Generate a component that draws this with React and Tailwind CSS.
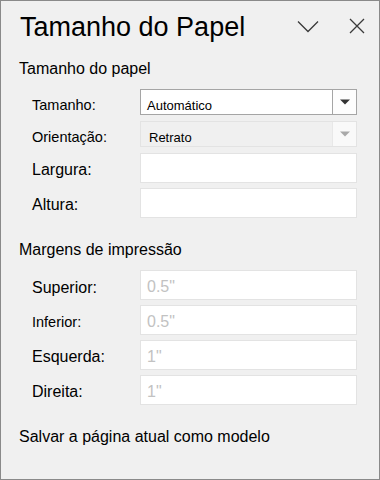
import React from 'react';

const font = { fontFamily: '"Liberation Sans", Arial, sans-serif' };

function Caret({ color }) {
  return (
    <svg width="10" height="6" viewBox="0 0 10 6">
      <path d="M0 0.5 H10 L5 5.5 Z" fill={color} />
    </svg>
  );
}

// label on the left, control on the right; pt on the label nudges its text a bit lower
function Row({ label, labelSize, labelShift, mt, h, children }) {
  return (
    <div className={`flex items-center pl-[31px] ${mt} ${h}`}>
      <div className={`w-[108px] leading-none text-black ${labelSize} ${labelShift}`}>{label}</div>
      <div className="w-[217px] h-full">{children}</div>
    </div>
  );
}

function Field({ value }) {
  return (
    <div className="h-full border border-[#e3e3e3] bg-white flex items-center pl-[6px] pt-[4px] text-[16px] leading-none text-[#c2c2c2]">
      {value}
    </div>
  );
}

export default function App() {
  return (
    <div style={font} className="w-[380px] h-[480px] border border-[#8a8a8a] bg-[#f0f0f0] flex flex-col">
      {/* Header */}
      <div className="h-[50px] flex items-center pl-[19px]">
        <h1 className="text-[27px] text-black leading-none pt-[2px]">Tamanho do Papel</h1>
        <div className="ml-auto flex items-center">
          <svg width="22" height="13" viewBox="0 0 22 13" className="mr-[30px]">
            <path d="M1 1.5 L11 11.5 L21 1.5" fill="none" stroke="#3a3a3a" strokeWidth="1.3" />
          </svg>
          <svg width="16" height="16" viewBox="0 0 16 16" className="mr-[14px]">
            <path d="M1 1 L15 15 M15 1 L1 15" fill="none" stroke="#3a3a3a" strokeWidth="1.3" />
          </svg>
        </div>
      </div>

      <div className="h-[24px] mt-[6px] flex items-center pl-[18px] text-[16px] text-black">Tamanho do papel</div>

      <Row label="Tamanho:" labelSize="text-[14.5px]" labelShift="pt-[7px]" mt="mt-[8px]" h="h-[26px]">
        <div className="h-full flex border border-[#a5a5a5] bg-white">
          <div className="flex-1 flex items-center pl-[6px] pt-[6px] text-[13px] leading-none text-black">Automático</div>
          <div className="w-[24px] border-l border-[#a5a5a5] bg-[#fdfdfd] flex items-center justify-center">
            <Caret color="#333" />
          </div>
        </div>
      </Row>

      <Row label="Orientação:" labelSize="text-[14.5px]" labelShift="pt-[7px]" mt="mt-[6px]" h="h-[26px]">
        <div className="h-full flex border border-[#e3e3e3] bg-[#f0f0f0]">
          <div className="flex-1 flex items-center pl-[8px] pt-[6px] text-[13px] leading-none text-black">Retrato</div>
          <div className="w-[24px] border-l border-[#e8e8e8] bg-[#f9f9f9] flex items-center justify-center">
            <Caret color="#a9a9a9" />
          </div>
        </div>
      </Row>

      <Row label="Largura:" labelSize="text-[16px]" labelShift="pt-[3px]" mt="mt-[6px]" h="h-[30px]">
        <Field value="" />
      </Row>
      <Row label="Altura:" labelSize="text-[16px]" labelShift="pt-[3px]" mt="mt-[5px]" h="h-[30px]">
        <Field value="" />
      </Row>

      <div className="h-[24px] mt-[20px] flex items-center pl-[18px] text-[16px] text-black">Margens de impressão</div>

      <Row label="Superior:" labelSize="text-[16px]" labelShift="pt-[6px]" mt="mt-[8px]" h="h-[30px]">
        <Field value={'0.5"'} />
      </Row>
      <Row label="Inferior:" labelSize="text-[14.5px]" labelShift="pt-[4px]" mt="mt-[5px]" h="h-[30px]">
        <Field value={'0.5"'} />
      </Row>
      <Row label="Esquerda:" labelSize="text-[16px]" labelShift="pt-[4px]" mt="mt-[5px]" h="h-[30px]">
        <Field value={'1"'} />
      </Row>
      <Row label="Direita:" labelSize="text-[16px]" labelShift="pt-[4px]" mt="mt-[5px]" h="h-[30px]">
        <Field value={'1"'} />
      </Row>

      <div className="h-[24px] mt-[20px] flex items-center pl-[18px] text-[16px] text-black">Salvar a página atual como modelo</div>
    </div>
  );
}
